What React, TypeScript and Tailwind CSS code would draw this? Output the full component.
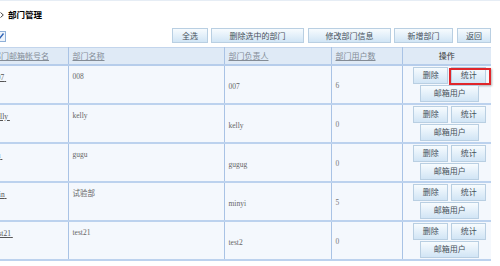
import React from "react";

const cjk = '"Liberation Serif", "Noto Sans CJK SC", serif';
const cjkSans = '"Noto Sans CJK SC", "Liberation Sans", sans-serif';

function Btn({ children, className = "" }: { children: React.ReactNode; className?: string }) {
  return (
    <div
      className={
        "relative flex items-center justify-center border border-[#b9cfe2] bg-gradient-to-b from-[#f7fbfe] to-[#d1e5f5] text-[#46505a] text-[8px] leading-none " +
        className
      }
      style={{ fontFamily: cjkSans }}
    >
      {children}
    </div>
  );
}

const rows = [
  { acct: "007", name: "008", owner: "007", count: "6", red: true },
  { acct: "kelly", name: "kelly", owner: "kelly", count: "0" },
  { acct: "gu", name: "gugu", owner: "gugug", count: "0" },
  { acct: "min", name: "试验部", owner: "minyi", count: "5" },
  { acct: "test21", name: "test21", owner: "test2", count: "0" },
];

export default function App() {
  return (
    <div className="w-[500px] h-[266px] overflow-hidden bg-white border-t border-[#e6edf5]">
      <div className="ml-[-11px] w-[502px]">
        {/* title */}
        <div className="h-[27px] flex items-center pl-[11px] gap-[4px]">
          <svg width="4" height="6" viewBox="0 0 4 6" className="mt-[1px]">
            <path d="M0.5 0.5 L3.3 3 L0.5 5.5" stroke="#444" strokeWidth="1" fill="none" />
          </svg>
          <span className="text-[8.5px] font-bold text-black leading-none" style={{ fontFamily: cjkSans }}>
            部门管理
          </span>
        </div>
        {/* toolbar */}
        <div className="h-[19px] flex items-start justify-between">
          <div className="ml-[5px] mt-[3px]">
            <svg width="12" height="11" viewBox="0 0 12 11">
              <rect x="0.5" y="0.5" width="11" height="10" fill="#eef4fb" stroke="#8fb0d8" />
              <path d="M3 5.5 L5.2 7.8 L9.5 2.5" stroke="#2f63b5" strokeWidth="1.4" fill="none" />
            </svg>
          </div>
          <div className="flex h-[15px]">
            <Btn className="w-[36px] h-[15px] mr-[3px]">全选</Btn>
            <Btn className="w-[93px] h-[15px] mr-[4px]">删除选中的部门</Btn>
            <Btn className="w-[83px] h-[15px] mr-[3px]">修改部门信息</Btn>
            <Btn className="w-[59px] h-[15px] mr-[4px]">新增部门</Btn>
            <Btn className="w-[34px] h-[15px]">返回</Btn>
          </div>
        </div>
        {/* table */}
        <table className="border-collapse table-fixed w-[502px]" style={{ fontFamily: cjk }}>
          <colgroup>
            <col className="w-[79px]" />
            <col className="w-[156px]" />
            <col className="w-[107px]" />
            <col className="w-[71px]" />
            <col className="w-[89px]" />
          </colgroup>
          <thead>
            <tr className="h-[17px] bg-[#dfeaf6] border-t border-[#c3d5ec] border-b-2 border-b-[#b6cdeb]">
              {["部门邮箱帐号名", "部门名称", "部门负责人", "部门用户数"].map((h) => (
                <th
                  key={h}
                  className="border-r border-[#a9c3e5] px-[4px] text-left font-normal text-[8px] leading-none text-[#838c96] underline whitespace-nowrap overflow-hidden"
                  style={{ fontFamily: cjkSans }}
                >
                  {h}
                </th>
              ))}
              <th
                className="text-center font-normal text-[8px] leading-none text-[#333]"
                style={{ fontFamily: cjkSans }}
              >
                操作
              </th>
            </tr>
          </thead>
          <tbody>
            {rows.map((r, i) => (
              <tr key={i} className="h-[39px] bg-[#f4f8fd] border-b-2 border-[#bcd2ee]">
                <td className="border-r border-[#a9c3e5] px-[4px] align-top pt-[7px] text-[7.5px] leading-[9px] text-[#555] whitespace-nowrap overflow-hidden">
                  <span className="underline">{r.acct}&nbsp;</span>
                </td>
                <td className="border-r border-[#a9c3e5] px-[4px] align-top pt-[6px] text-[7.5px] leading-[9px] text-[#666]">
                  {r.name}
                </td>
                <td className="border-r border-[#a9c3e5] px-[4px] align-middle pt-[4px] text-[7.5px] leading-[9px] text-[#666]">
                  {r.owner}
                </td>
                <td className="border-r border-[#a9c3e5] px-[4px] align-middle pt-[2px] text-[7.5px] leading-[9px] text-[#777]">
                  {r.count}
                </td>
                <td className="align-top pt-[1px] pl-[6px]">
                  <div className="flex flex-col items-center">
                    <div className="flex gap-[3px]">
                      <Btn className="w-[35px] h-[17px]">删除</Btn>
                      <Btn className="w-[35px] h-[17px]">
                        统计
                        {r.red && (
                          <div className="absolute left-[-3px] right-[-6px] top-[0px] bottom-[-2px] border-2 border-[#e0262b] shadow-[1px_1px_2px_rgba(0,0,0,0.3)]" />
                        )}
                      </Btn>
                    </div>
                    <Btn className="w-[59px] h-[17px] mt-[1px]">邮箱用户</Btn>
                  </div>
                </td>
              </tr>
            ))}
          </tbody>
        </table>
      </div>
    </div>
  );
}
